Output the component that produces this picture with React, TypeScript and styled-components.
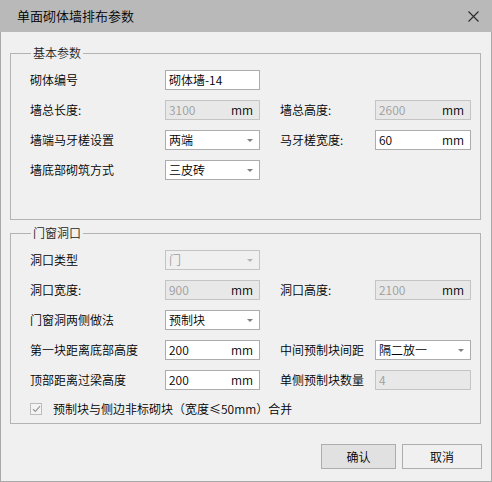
import React from "react";
import styled, { createGlobalStyle } from "styled-components";

const GlobalStyle = createGlobalStyle`
    html, body {
        margin: 0;
        padding: 0;
        background: #f0f0f0;
    }
    body {
        font-family: "Noto Sans CJK SC", "Noto Sans", sans-serif;
        font-size: 12px;
        font-weight: 350;
        color: #000000;
    }
    * {
        box-sizing: border-box;
    }
`

type FieldProps = {
    value: string;
    unit?: boolean;
    select?: boolean;
    disabled?: boolean;
};

const Field = ({ value, unit, select, disabled }: FieldProps) => (
    <InputBox $disabled={disabled} $select={select}>
        <InputValue $disabled={disabled}>{value}</InputValue>
        {unit && <Unit>mm</Unit>}
        {select && <Arrow $disabled={disabled} />}
    </InputBox>
)

const App = () => {
    return (
        <Window>
            <GlobalStyle />
            <TitleBar>
                <Title>单面砌体墙排布参数</Title>
                <svg width="11" height="11" viewBox="0 0 11 11" className="close">
                    <path d="M0.5 0.5L10.5 10.5M10.5 0.5L0.5 10.5" stroke="#2b2b2b" strokeWidth="1.1" fill="none" />
                </svg>
            </TitleBar>
            <Body>
                <Group $pb={39}>
                    <Legend>基本参数</Legend>
                    <Rows>
                        <Row>
                            <Label>砌体编号</Label>
                            <Field value="砌体墙-14" />
                        </Row>
                        <Row>
                            <Label>墙总长度:</Label>
                            <Field value="3100" unit disabled />
                            <Label className="right">墙总高度:</Label>
                            <Field value="2600" unit disabled />
                        </Row>
                        <Row>
                            <Label>墙端马牙槎设置</Label>
                            <Field value="两端" select />
                            <Label className="right">马牙槎宽度:</Label>
                            <Field value="60" unit />
                        </Row>
                        <Row>
                            <Label>墙底部砌筑方式</Label>
                            <Field value="三皮砖" select />
                        </Row>
                    </Rows>
                </Group>
                <Group $pb={5} className="second">
                    <Legend>门窗洞口</Legend>
                    <Rows>
                        <Row>
                            <Label>洞口类型</Label>
                            <Field value="门" select disabled />
                        </Row>
                        <Row>
                            <Label>洞口宽度:</Label>
                            <Field value="900" unit disabled />
                            <Label className="right">洞口高度:</Label>
                            <Field value="2100" unit disabled />
                        </Row>
                        <Row>
                            <Label>门窗洞两侧做法</Label>
                            <Field value="预制块" select />
                        </Row>
                        <Row>
                            <Label>第一块距离底部高度</Label>
                            <Field value="200" unit />
                            <Label className="right">中间预制块间距</Label>
                            <Field value="隔二放一" select />
                        </Row>
                        <Row>
                            <Label>顶部距离过梁高度</Label>
                            <Field value="200" unit />
                            <Label className="right">单侧预制块数量</Label>
                            <Field value="4" disabled />
                        </Row>
                    </Rows>
                    <CheckRow>
                        <CheckBox>
                            <svg width="9" height="8" viewBox="0 0 9 8">
                                <path d="M1 4.2L3.4 6.5L8 1.2" stroke="#9a9a9a" strokeWidth="1.2" fill="none" />
                            </svg>
                        </CheckBox>
                        <span>预制块与侧边非标砌块（宽度≤50mm）合并</span>
                    </CheckRow>
                </Group>
                <Footer>
                    <Button $w={75} $primary>确认</Button>
                    <Button $w={80}>取消</Button>
                </Footer>
            </Body>
        </Window>
    )
}

const Window = styled.div`
    width: 492px;
    height: 482px;
    display: flex;
    flex-direction: column;
    background: #f0f0f0;
`
const TitleBar = styled.div`
    height: 32px;
    flex-shrink: 0;
    background: #b9b9b9;
    display: flex;
    align-items: center;
    justify-content: space-between;
    padding: 0 13px 0 17px;
    .close{
        margin-top: 1px;
    }
`
const Title = styled.span`
    font-size: 13px;
    line-height: 16px;
    color: #000000;
`
const Body = styled.div`
    flex: 1;
    display: flex;
    flex-direction: column;
    border: 1px solid #a9a9a9;
    border-top: none;
    padding: 21px 10px 0 9px;
`
const Group = styled.div<{ $pb: number }>`
    position: relative;
    border: 1px solid #b3b3b3;
    padding: 16px 8px ${p => p.$pb}px 19px;
    &.second{
        margin-top: 13px;
    }
`
const Legend = styled.span`
    position: absolute;
    top: -9px;
    left: 20px;
    padding: 0 2px;
    background: #f0f0f0;
    line-height: 16px;
    color: #1e1e1e;
`
const Rows = styled.div`
    display: flex;
    flex-direction: column;
    gap: 10px;
`
const Row = styled.div`
    display: grid;
    grid-template-columns: 135px 95px 115px 96px;
    height: 20px;
    align-items: center;
`
const Label = styled.span`
    line-height: 20px;
    color: #000000;
    white-space: nowrap;
    &.right{
        padding-left: 20px;
    }
`
const InputBox = styled.div<{ $disabled?: boolean; $select?: boolean }>`
    height: 20px;
    display: flex;
    align-items: center;
    padding: 0 6px 0 3px;
    border: 1px solid ${p => (p.$disabled ? "#c4c4c4" : "#acacac")};
    background: ${p => (p.$disabled ? (p.$select ? "#f0f0f0" : "#e8e8e8") : "#ffffff")};
`
const InputValue = styled.span<{ $disabled?: boolean }>`
    flex: 1;
    line-height: 18px;
    color: ${p => (p.$disabled ? "#9d9d9d" : "#000000")};
    white-space: nowrap;
`
const Unit = styled.span`
    line-height: 18px;
    color: #000000;
`
const Arrow = styled.span<{ $disabled?: boolean }>`
    width: 0;
    height: 0;
    border-left: 3px solid transparent;
    border-right: 3px solid transparent;
    border-top: 3px solid ${p => (p.$disabled ? "#b4b4b4" : "#808080")};
`
const CheckRow = styled.label`
    display: flex;
    align-items: center;
    gap: 11px;
    height: 18px;
    margin-top: 10px;
    line-height: 18px;
    color: #000000;
`
const CheckBox = styled.span`
    width: 12px;
    height: 12px;
    border: 1px solid #bcbcbc;
    background: #f4f4f4;
    display: flex;
    align-items: center;
    justify-content: center;
`
const Footer = styled.div`
    display: flex;
    justify-content: flex-end;
    gap: 6px;
    margin-top: 20px;
    margin-right: -1px;
`
const Button = styled.button<{ $w: number; $primary?: boolean }>`
    width: ${p => p.$w}px;
    height: 25px;
    padding: 0;
    font-family: inherit;
    font-size: 12px;
    font-weight: inherit;
    color: #000000;
    border: 1px solid #adadad;
    background: ${p => (p.$primary ? "#e1e1e1" : "#f0f0f0")};
`

export default App;
